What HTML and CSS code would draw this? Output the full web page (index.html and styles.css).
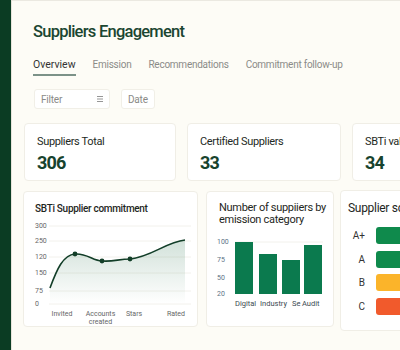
FILE: index.html
```html
<!DOCTYPE html>
<html>
<head>
    <link rel="stylesheet" href="styles.css">
</head>
<body>
    <div class="app">
        <div class="sidebar"></div>
        <div class="main">
            <div class="page-header">
                <h1>Suppliers Engagement</h1>
                <div class="tabs">
                    <span class="tab active">Overview</span>
                    <span class="tab">Emission</span>
                    <span class="tab">Recommendations</span>
                    <span class="tab">Commitment follow-up</span>
                </div>
                <div class="filters">
                    <div class="filter-box filter-wide">
                        <span>Filter</span>
                        <svg width="6" height="6" viewBox="0 0 6 6">
                            <path d="M0 0.5H6M0 3H6M0 5.5H6" stroke="#8a8a8a" stroke-width="0.9"/>
                        </svg>
                    </div>
                    <div class="filter-box">Date</div>
                </div>
            </div>

            <div class="stat-row">
                <div class="card stat-card">
                    <div class="stat-label">Suppliers Total</div>
                    <div class="stat-value">306</div>
                </div>
                <div class="card stat-card">
                    <div class="stat-label">Certified Suppliers</div>
                    <div class="stat-value">33</div>
                </div>
                <div class="card stat-card">
                    <div class="stat-label">SBTi validated</div>
                    <div class="stat-value">34</div>
                </div>
            </div>

            <div class="chart-row">
                <div class="card chart-card line-card">
                    <h3 class="chart-title strong">SBTi Supplier commitment</h3>
                    <svg class="line-chart" width="165" height="110" viewBox="0 0 165 110">
                        <defs>
                            <linearGradient id="area" x1="0" y1="0" x2="0" y2="1">
                                <stop offset="0" stop-color="#1f6b45" stop-opacity="0.2"/>
                                <stop offset="1" stop-color="#1f6b45" stop-opacity="0"/>
                            </linearGradient>
                        </defs>
                        <g class="grid">
                            <line x1="18" y1="9" x2="160" y2="9"/>
                            <line x1="18" y1="24" x2="160" y2="24"/>
                            <line x1="18" y1="40" x2="160" y2="40"/>
                            <line x1="18" y1="56" x2="160" y2="56"/>
                            <line x1="18" y1="74" x2="160" y2="74"/>
                            <line x1="18" y1="87" x2="160" y2="87"/>
                        </g>
                        <g class="axis-y">
                            <text x="4" y="9">300</text>
                            <text x="4" y="24">250</text>
                            <text x="4" y="40">120</text>
                            <text x="4" y="56">150</text>
                            <text x="4" y="74">75</text>
                            <text x="4" y="87">0</text>
                        </g>
                        <path d="M19,71 C26,52 32,38 44,37 C56,36 62,44 71,44 C82,45 88,42 99,42 C120,40 135,25 154,23 L154,87 L19,87 Z" fill="url(#area)"/>
                        <path class="line" d="M19,71 C26,52 32,38 44,37 C56,36 62,44 71,44 C82,45 88,42 99,42 C120,40 135,25 154,23"/>
                        <g class="dots">
                            <circle cx="44" cy="37" r="2.4"/>
                            <circle cx="71" cy="44" r="2.4"/>
                            <circle cx="99" cy="42" r="2.4"/>
                        </g>
                        <g class="axis-x">
                            <text x="31" y="97">Invited</text>
                            <text x="69.5" y="97">Accounts</text>
                            <text x="69.5" y="105">created</text>
                            <text x="103" y="97">Stars</text>
                            <text x="145" y="97">Rated</text>
                        </g>
                    </svg>
                </div>

                <div class="card chart-card bar-card">
                    <h3 class="chart-title">Number of suppiiers by<br>emission category</h3>
                    <svg class="bar-chart" width="112" height="80" viewBox="0 0 112 80">
                        <line class="grid" x1="20" y1="10" x2="108" y2="10"/>
                        <g class="axis-y">
                            <text x="2" y="10">100</text>
                            <text x="2" y="28">75</text>
                            <text x="2" y="46">50</text>
                            <text x="2" y="62">20</text>
                        </g>
                        <g class="bars">
                            <rect x="20" y="10" width="18" height="52"/>
                            <rect x="44" y="22" width="18" height="40"/>
                            <rect x="67" y="28" width="18" height="34"/>
                            <rect x="89" y="13" width="18" height="49"/>
                        </g>
                        <g class="axis-x">
                            <text x="20" y="72">Digital</text>
                            <text x="45" y="72">Industry</text>
                            <text x="77" y="72">Se</text>
                            <text x="87" y="72">Audit</text>
                        </g>
                    </svg>
                </div>

                <div class="card chart-card score-card">
                    <h3 class="chart-title">Supplier score</h3>
                    <div class="score-list">
                        <div class="score-row">
                            <span class="score-label">A+</span>
                            <span class="score-bar green"></span>
                        </div>
                        <div class="score-row">
                            <span class="score-label">A</span>
                            <span class="score-bar green"></span>
                        </div>
                        <div class="score-row">
                            <span class="score-label">B</span>
                            <span class="score-bar orange"></span>
                        </div>
                        <div class="score-row">
                            <span class="score-label">C</span>
                            <span class="score-bar red"></span>
                        </div>
                    </div>
                </div>
            </div>
        </div>
    </div>
</body>
</html>
```

FILE: styles.css
```css
body {
    font-family: Roboto, "Liberation Sans", sans-serif;
    margin: 0;
    background: #fdfcf6;
    width: 400px;
    height: 350px;
    overflow: hidden;
}
.app {
    display: flex;
    height: 350px;
}
.sidebar {
    width: 11px;
    flex-shrink: 0;
    background: #0b3c23;
    border-right: 1px solid #e6e4da;
}
.main {
    flex: 1;
    min-width: 0;
    overflow: hidden;
    border-top: 1px solid #ebe9e1;
}
.page-header {
    padding: 21px 0 0 21px;
}
.page-header h1 {
    font-size: 16.5px;
    font-weight: 500;
    line-height: 20px;
    margin: 0;
    color: #1b4631;
    letter-spacing: -0.75px;
}
.tabs {
    display: flex;
    gap: 17px;
    margin-top: 16px;
    white-space: nowrap;
}
.tab {
    font-size: 10px;
    line-height: 14px;
    color: #8b8b88;
    letter-spacing: -0.25px;
    padding-bottom: 2px;
    border-bottom: 2px solid transparent;
}
.tab.active {
    font-size: 10.5px;
    letter-spacing: 0;
    color: #333;
    border-bottom-color: #7c9288;
}
.filters {
    display: flex;
    gap: 11px;
    margin-top: 13px;
    margin-left: 1px;
}
.filter-box {
    height: 20px;
    background: #fff;
    border: 1px solid #f1efe7;
    border-radius: 3px;
    box-sizing: border-box;
    padding: 0 6px;
    display: flex;
    align-items: center;
    justify-content: space-between;
    font-size: 10px;
    letter-spacing: -0.2px;
    color: #8a8a87;
}
.filter-wide {
    width: 76px;
}
.stat-row {
    display: flex;
    gap: 11px;
    margin: 14px 0 0 12px;
}
.card {
    background: #fff;
    border: 1px solid #f0eee6;
    border-radius: 4px;
    box-sizing: border-box;
    flex-shrink: 0;
}
.stat-card {
    width: 152px;
    height: 58px;
    padding: 11px 12px;
}
.stat-card:nth-child(2) {
    width: 154px;
}
.stat-label {
    font-size: 11px;
    line-height: 14px;
    color: #1e2a24;
    letter-spacing: -0.35px;
    white-space: nowrap;
}
.stat-value {
    font-size: 18px;
    font-weight: 700;
    line-height: 22px;
    margin-top: 3px;
    letter-spacing: -0.8px;
    color: #17432e;
}
.chart-row {
    display: flex;
    gap: 8px;
    margin: 10px 0 0 11px;
    align-items: flex-start;
}
.chart-card {
    height: 136px;
    padding: 10px 11px;
}
.chart-title {
    font-size: 11px;
    font-weight: 400;
    line-height: 11.6px;
    margin: 0;
    color: #1e2622;
    white-space: nowrap;
    letter-spacing: -0.3px;
}
.chart-title.strong {
    font-size: 10px;
    font-weight: 500;
    line-height: 13px;
}
.line-card {
    width: 175px;
}
.line-chart {
    display: block;
    margin: 2px 0 0 -4px;
    overflow: visible;
}
.grid line, line.grid {
    stroke: #f2f1ec;
    stroke-width: 1;
}
.axis-y text {
    font-size: 7px;
    fill: #666;
    dominant-baseline: middle;
}
.line-chart .axis-x text {
    font-size: 7px;
    fill: #666;
    text-anchor: middle;
    dominant-baseline: middle;
}
.line {
    fill: none;
    stroke: #123e28;
    stroke-width: 1.6;
}
.dots circle {
    fill: #123e28;
}
.bar-card {
    width: 128px;
    padding: 10px 12px;
}
.bar-chart {
    display: block;
    margin: 7px 0 0 -4px;
    overflow: visible;
}
.bar-chart .axis-y text {
    fill: #5d7385;
}
.bars rect {
    fill: #0b7a4e;
}
.bar-chart .axis-x text {
    font-size: 7.5px;
    fill: #3b4a51;
    dominant-baseline: middle;
}
.score-card {
    width: 120px;
    height: 141px;
    margin: -1px 0 0 -2px;
    padding: 11px 7px;
}
.score-card .chart-title {
    font-size: 12px;
    line-height: 13px;
}
.score-list {
    display: flex;
    flex-direction: column;
    gap: 6.7px;
    margin-top: 12px;
}
.score-row {
    display: flex;
    align-items: center;
    gap: 11px;
}
.score-label {
    width: 17px;
    text-align: right;
    font-size: 10px;
    color: #333;
}
.score-bar {
    width: 60px;
    height: 17px;
    border-radius: 3px;
}
.green {
    background: #0f8a4c;
}
.orange {
    background: #fbb42a;
}
.red {
    background: #f15a2c;
}
```
